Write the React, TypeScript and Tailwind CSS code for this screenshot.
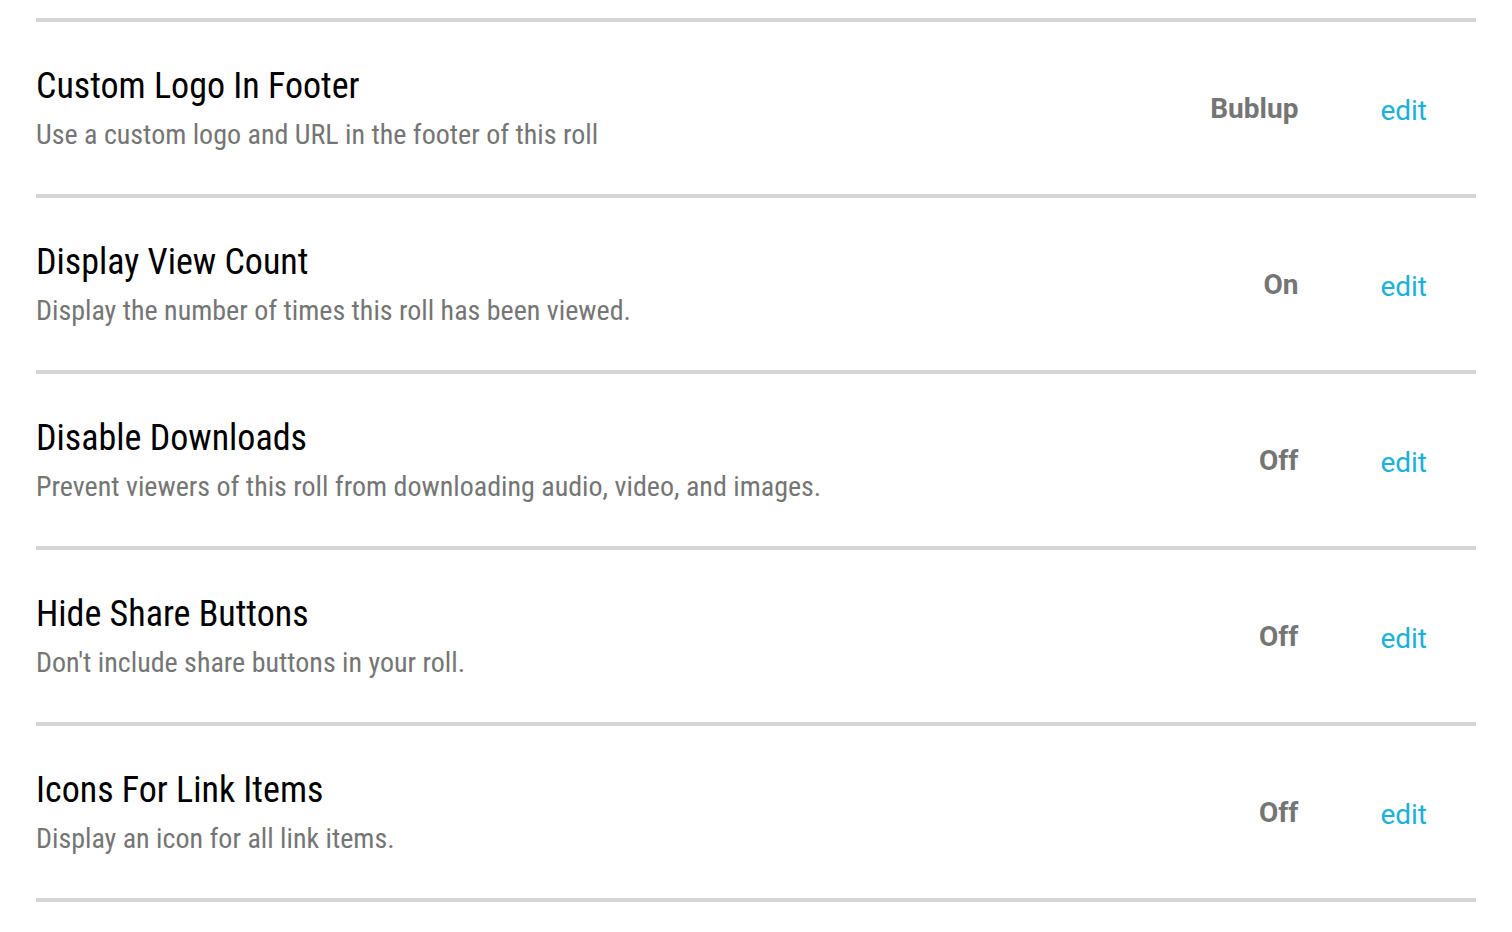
const settings = [
  {
    title: "Custom Logo In Footer",
    description: "Use a custom logo and URL in the footer of this roll",
    value: "Bublup",
  },
  {
    title: "Display View Count",
    description: "Display the number of times this roll has been viewed.",
    value: "On",
  },
  {
    title: "Disable Downloads",
    description: "Prevent viewers of this roll from downloading audio, video, and images.",
    value: "Off",
  },
  {
    title: "Hide Share Buttons",
    description: "Don't include share buttons in your roll.",
    value: "Off",
  },
  {
    title: "Icons For Link Items",
    description: "Display an icon for all link items.",
    value: "Off",
  },
];

export default function App() {
  return (
    <main className="min-h-screen bg-white px-9 pt-[18px] font-['Roboto',sans-serif]">
      <ul className="border-b-4 border-[#d4d4d4]">
        {settings.map((s) => (
          <li
            key={s.title}
            className="flex h-[176px] items-center border-t-4 border-[#d4d4d4]"
          >
            <div className="flex-1 [font-stretch:condensed]">
              <h3 className="text-[36px] leading-[42px] text-black">{s.title}</h3>
              <p className="mt-3 text-[28px] leading-[32px] text-[#757575]">
                {s.description}
              </p>
            </div>
            <span className="mt-[2px] text-right text-[28px] font-bold text-[#757575]">
              {s.value}
            </span>
            <a href="#" className="mt-[6px] ml-[82px] mr-[49px] text-[28px] text-[#1ab0d7]">
              edit
            </a>
          </li>
        ))}
      </ul>
    </main>
  );
}
